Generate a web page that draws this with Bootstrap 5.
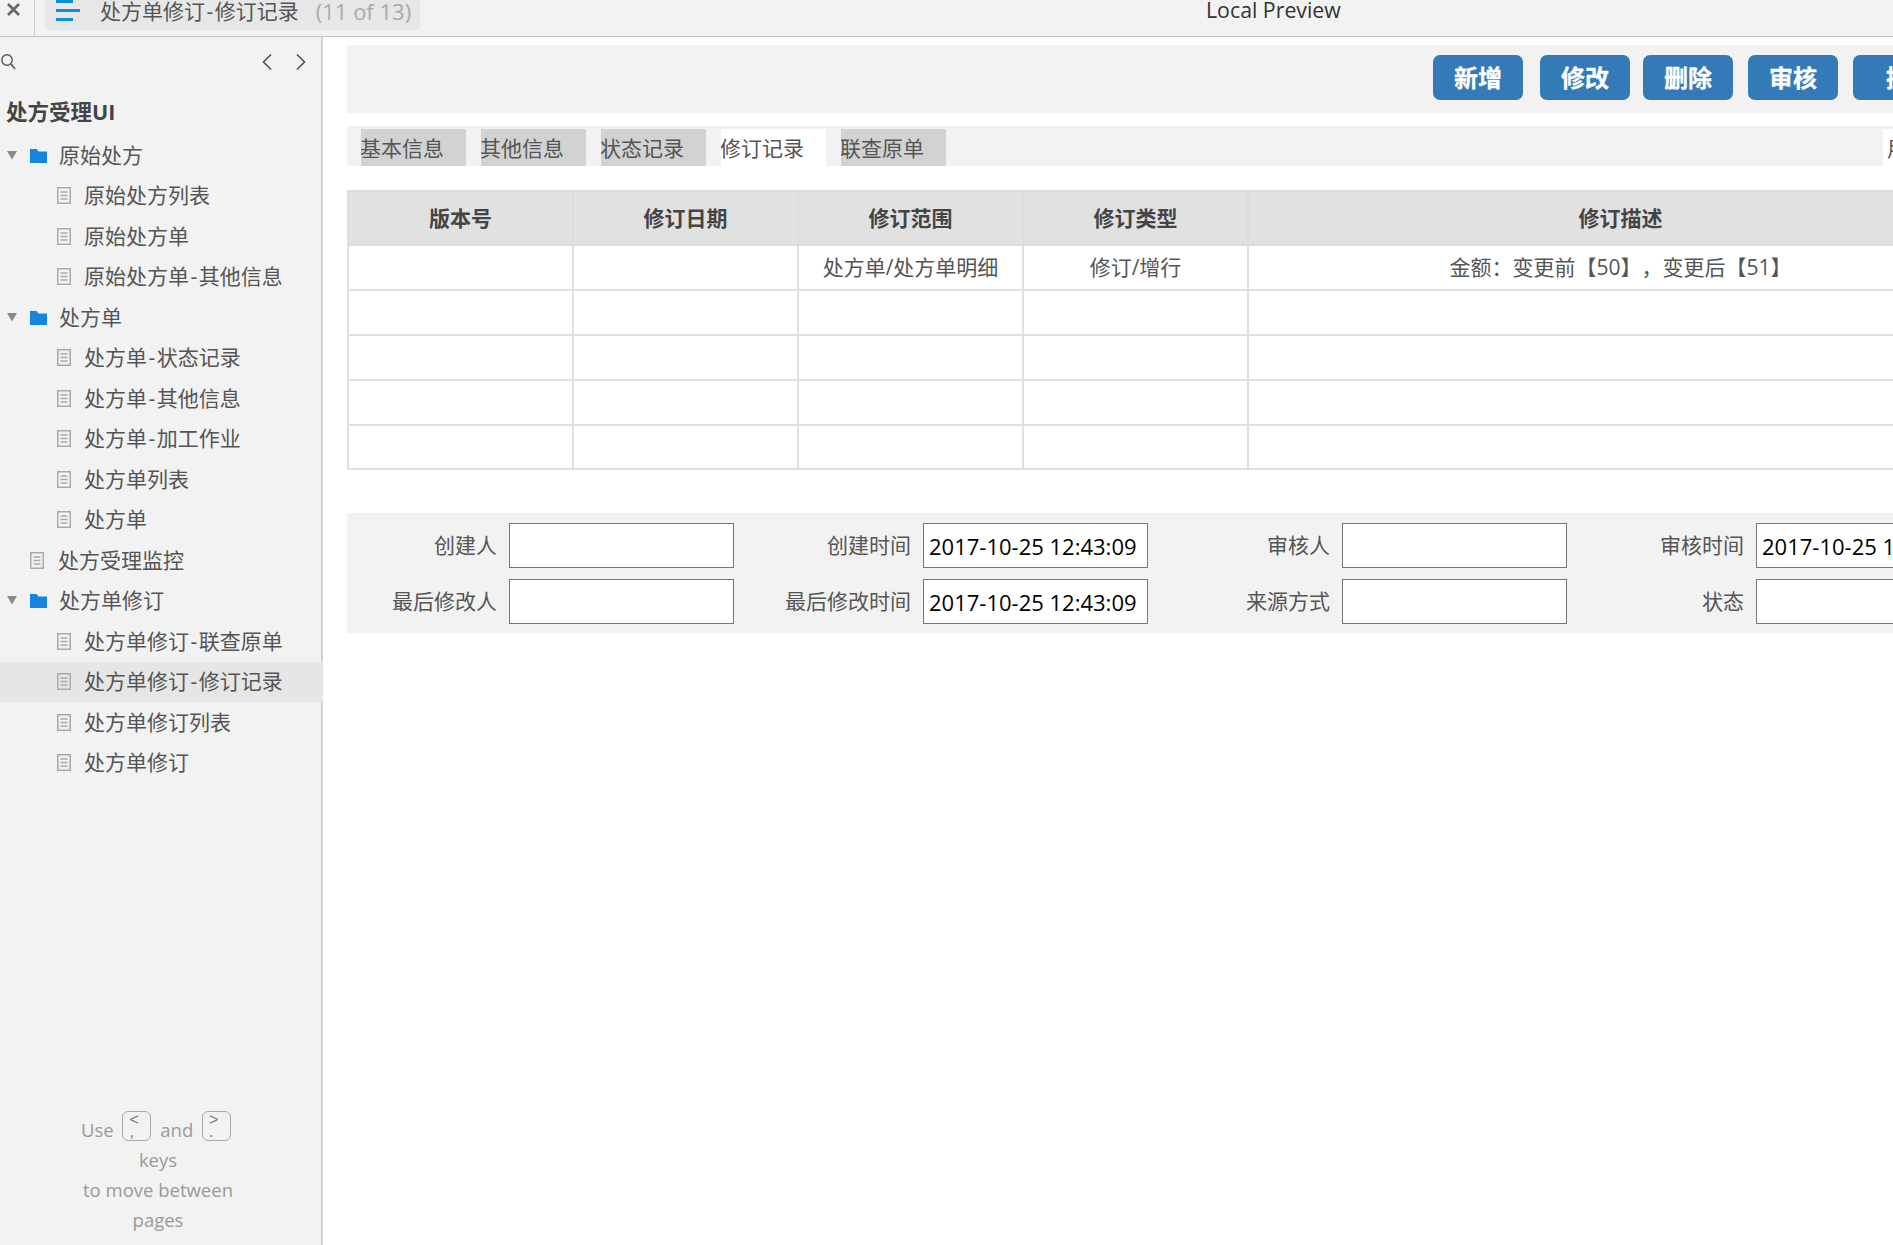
<!DOCTYPE html>
<html lang="zh-CN">
<head>
<meta charset="utf-8">
<title>Local Preview</title>
<link rel="stylesheet" href="https://cdn.jsdelivr.net/npm/bootstrap@5.3.0/dist/css/bootstrap.min.css">
<style>
html,body{height:1245px;overflow:hidden}
body{font-family:"Open Sans","Noto Sans CJK SC",sans-serif;font-size:21px;color:#555;background:#fff;line-height:1.3;text-spacing-trim:space-all}
.app-top{height:37px;background:#f2f2f2;border-bottom:1px solid #c4c4c4;flex:none}
.close-cell{width:35px;height:36px;border-right:1px solid #d0d0d0;padding:0 0 0 6px;flex:none}
.close-cell svg{display:block;margin-top:2px}
.page-chip{margin-left:10px;width:375px;height:30px;background:#e7e7e7;border-radius:0 0 4px 4px;padding-left:11px;flex:none;white-space:nowrap;overflow:hidden}
.page-title{margin-left:20px;line-height:22px;color:#555}
.page-count{margin-left:17px;line-height:22px;color:#aaa;font-size:22px}
.hy{padding:0 1.5px}
.top-center{position:absolute;left:1206px;top:-5px;font-size:21.3px;line-height:30px;color:#333}
.side-pane{width:323px;flex:none;background:#f2f2f2;border-right:2px solid #d2d2d2;height:1208px}
.search-row{height:51px;padding:0 14px 2px 0}
.arrow-next{margin-left:22px}
.side-title{height:47px;line-height:47px;padding-left:6px;font-weight:700;font-size:21.5px;color:#444}
.tree-row{height:40.5px;white-space:nowrap;padding-left:7px}
.tree-row.lvl-2{padding-left:57px}
.tree-row.lvl-1b{padding-left:30px}
.tree-row.is-current{background:#e6e6e6;margin-right:-2px;position:relative}
.tree-row .tri{width:10px;margin-right:13px}
.tree-row .fold{width:17px;margin-right:12px}
.tree-row .doc{width:14px;margin-right:13px}
.tree-row.lvl-1b .doc{margin-right:14px}
.hint-box{margin-top:auto;padding:0 10px 10px 5px;color:#999;font-size:18.5px;line-height:30px;text-align:center}
.key-cap{display:inline-block;width:29px;height:30px;border:1.5px solid #aaa;border-radius:6px;margin:0 4px;vertical-align:0;font-size:16px;line-height:12px;text-align:left;padding:2px 0 0 6px;color:#777;font-family:"Liberation Sans",sans-serif}
.main-pane{min-width:0;overflow:hidden;padding:8px 0 0 24px}
.tool-band{width:1647px;height:68px;background:#f2f2f2;padding:10px 0 0 1086px;white-space:nowrap}
.tool-btn{width:90px;height:45px;flex:none;background:#337ab7;border:0;border-radius:7px;color:#fff;font-weight:700;font-size:24px;line-height:46px;padding:0;margin-left:15px;text-align:center;overflow:hidden;-webkit-text-stroke:.3px #fff}
.tool-btn:hover{background:#337ab7;color:#fff}
.tool-btn.first{margin-left:0}
.tool-btn.wide{margin-left:17px}
.tool-btn.tight{margin-left:13px}
.tool-btn.last{width:114px}
.tab-band{width:1647px;height:40px;margin-top:13px;background:#f2f2f2;padding:3px 0 0 14px}
.tab-item{width:105px;height:37px;flex:none;background:#d2d2d2;margin-right:15px;line-height:38px;color:#555;white-space:nowrap;overflow:hidden;text-indent:-1px}
.tab-item.on{background:#fff}
.tab-item.far{margin-left:922px;padding-left:5px}
.rev-table{width:1647px;table-layout:fixed;margin:24px 0 0;border-collapse:collapse;color:#555}
.rev-table th,.rev-table td{border:2px solid #e0e0e0;text-align:center;vertical-align:middle;padding:0;font-size:21px}
.rev-table thead th{height:54px;background:#e1e1e1;color:#444;font-weight:700;padding-top:1px;border-color:#dcdcdc}
.rev-table tbody td{height:45px;background:#fff}
.rev-table tbody tr:last-child td{height:44px}
.rev-col{width:225px}
.form-band{width:1647px;height:120px;margin-top:43px;background:#f2f2f2;padding:10px 0 0;display:grid;grid-template-columns:162px 225px 189px 225px 194px 225px 189px 225px;grid-auto-rows:45px;row-gap:11px;align-items:center}
.form-lab{text-align:right;padding-right:12px;color:#555;white-space:nowrap}
.form-box{width:225px;height:45px;border:1px solid #767676;border-radius:0;background:#fff;color:#000;font-size:22px;padding:0 5px;font-family:"Open Sans","Noto Sans CJK SC",sans-serif}
</style>
</head>
<body class="d-flex flex-column">
<header class="app-top d-flex position-relative">
  <div class="close-cell"><svg width="15" height="15" viewBox="0 0 15 15"><path d="M2 2L13 13M13 2L2 13" stroke="#666" stroke-width="2.6" fill="none"/></svg></div>
  <div class="page-chip d-flex align-items-start">
    <svg width="24" height="21" viewBox="0 0 24 21"><rect x="0" y="0" width="17" height="3" fill="#0e8ed4"/><rect x="0" y="9" width="24" height="3" fill="#0e8ed4"/><rect x="0" y="18" width="17" height="3" fill="#0e8ed4"/></svg>
    <span class="page-title">处方单修订<span class="hy">-</span>修订记录</span><span class="page-count">(11 of 13)</span>
  </div>
  <div class="top-center">Local Preview</div>
</header>
<div class="d-flex flex-grow-1">
  <aside class="side-pane d-flex flex-column">
    <div class="search-row d-flex align-items-center">
      <svg width="16" height="17" viewBox="0 0 16 17"><circle cx="7" cy="7" r="5.2" fill="none" stroke="#555" stroke-width="1.4"/><path d="M11 11L15 16" stroke="#555" stroke-width="1.6"/></svg>
      <svg width="12" height="18" viewBox="0 0 12 18" class="ms-auto"><path d="M10 1.5L2.5 9l7.5 7.5" fill="none" stroke="#555" stroke-width="1.7"/></svg>
      <svg width="12" height="18" viewBox="0 0 12 18" class="arrow-next"><path d="M2 1.5L9.5 9 2 16.5" fill="none" stroke="#555" stroke-width="1.7"/></svg>
    </div>
    <div class="side-title">处方受理UI</div>
    <ul class="list-unstyled m-0" id="tree"></ul>
    <div class="hint-box">
      <div>Use <span class="key-cap">&lt;<br>,</span> and <span class="key-cap">&gt;<br>.</span></div>
      <div>keys</div>
      <div>to move between</div>
      <div>pages</div>
    </div>
  </aside>
  <main class="main-pane flex-grow-1">
    <div class="tool-band d-flex">
      <button class="btn tool-btn first">新增</button>
      <button class="btn tool-btn wide">修改</button>
      <button class="btn tool-btn tight">删除</button>
      <button class="btn tool-btn">审核</button>
      <button class="btn tool-btn last">提交</button>
    </div>
    <div class="tab-band d-flex">
      <div class="tab-item">基本信息</div>
      <div class="tab-item">其他信息</div>
      <div class="tab-item">状态记录</div>
      <div class="tab-item on">修订记录</div>
      <div class="tab-item">联查原单</div>
      <div class="tab-item on far">用户</div>
    </div>
    <table class="rev-table">
      <colgroup><col class="rev-col"><col class="rev-col"><col class="rev-col"><col class="rev-col"><col></colgroup>
      <thead><tr><th>版本号</th><th>修订日期</th><th>修订范围</th><th>修订类型</th><th>修订描述</th></tr></thead>
      <tbody>
        <tr><td></td><td></td><td>处方单/处方单明细</td><td>修订/增行</td><td>金额：变更前【50】，变更后【51】</td></tr>
        <tr><td></td><td></td><td></td><td></td><td></td></tr>
        <tr><td></td><td></td><td></td><td></td><td></td></tr>
        <tr><td></td><td></td><td></td><td></td><td></td></tr>
        <tr><td></td><td></td><td></td><td></td><td></td></tr>
      </tbody>
    </table>
    <div class="form-band">
      <div class="form-lab">创建人</div><input class="form-box" value="">
      <div class="form-lab">创建时间</div><input class="form-box" value="2017-10-25 12:43:09">
      <div class="form-lab">审核人</div><input class="form-box" value="">
      <div class="form-lab">审核时间</div><input class="form-box" value="2017-10-25 12:43:09">
      <div class="form-lab">最后修改人</div><input class="form-box" value="">
      <div class="form-lab">最后修改时间</div><input class="form-box" value="2017-10-25 12:43:09">
      <div class="form-lab">来源方式</div><input class="form-box" value="">
      <div class="form-lab">状态</div><input class="form-box" value="">
    </div>
  </main>
</div>
<script>
var rows=[[0,"原始处方"],[2,"原始处方列表"],[2,"原始处方单"],[2,"原始处方单-其他信息"],[0,"处方单"],[2,"处方单-状态记录"],[2,"处方单-其他信息"],[2,"处方单-加工作业"],[2,"处方单列表"],[2,"处方单"],[1,"处方受理监控"],[0,"处方单修订"],[2,"处方单修订-联查原单"],[2,"处方单修订-修订记录",1],[2,"处方单修订列表"],[2,"处方单修订"]];
var tri='<svg class="tri" height="9" viewBox="0 0 10 9"><path d="M0 0h10L5 8.5z" fill="#8a8a8a"/></svg>';
var fold='<svg class="fold" height="15" viewBox="0 0 17 15"><path d="M0 1h6.5l2 2.5H17V15H0z" fill="#1585e0"/></svg>';
var doc='<svg class="doc" height="17" viewBox="0 0 14 17"><rect x=".75" y=".75" width="12.5" height="15.5" fill="none" stroke="#aaa" stroke-width="1.5"/><path d="M3.5 5h7M3.5 8.5h7M3.5 12h7" stroke="#aaa" stroke-width="1.3"/></svg>';
document.getElementById("tree").innerHTML=rows.map(function(r){
  var cls=r[0]==2?"lvl-2":r[0]==1?"lvl-1b":"";
  return '<li class="tree-row d-flex align-items-center '+cls+(r[2]?" is-current":"")+'">'+(r[0]==0?tri+fold:doc)+'<span>'+r[1].replace("-",'<span class="hy">-</span>')+'</span></li>';
}).join("");
</script>
<script src="https://cdn.jsdelivr.net/npm/bootstrap@5.3.0/dist/js/bootstrap.bundle.min.js"></script>
</body>
</html>
